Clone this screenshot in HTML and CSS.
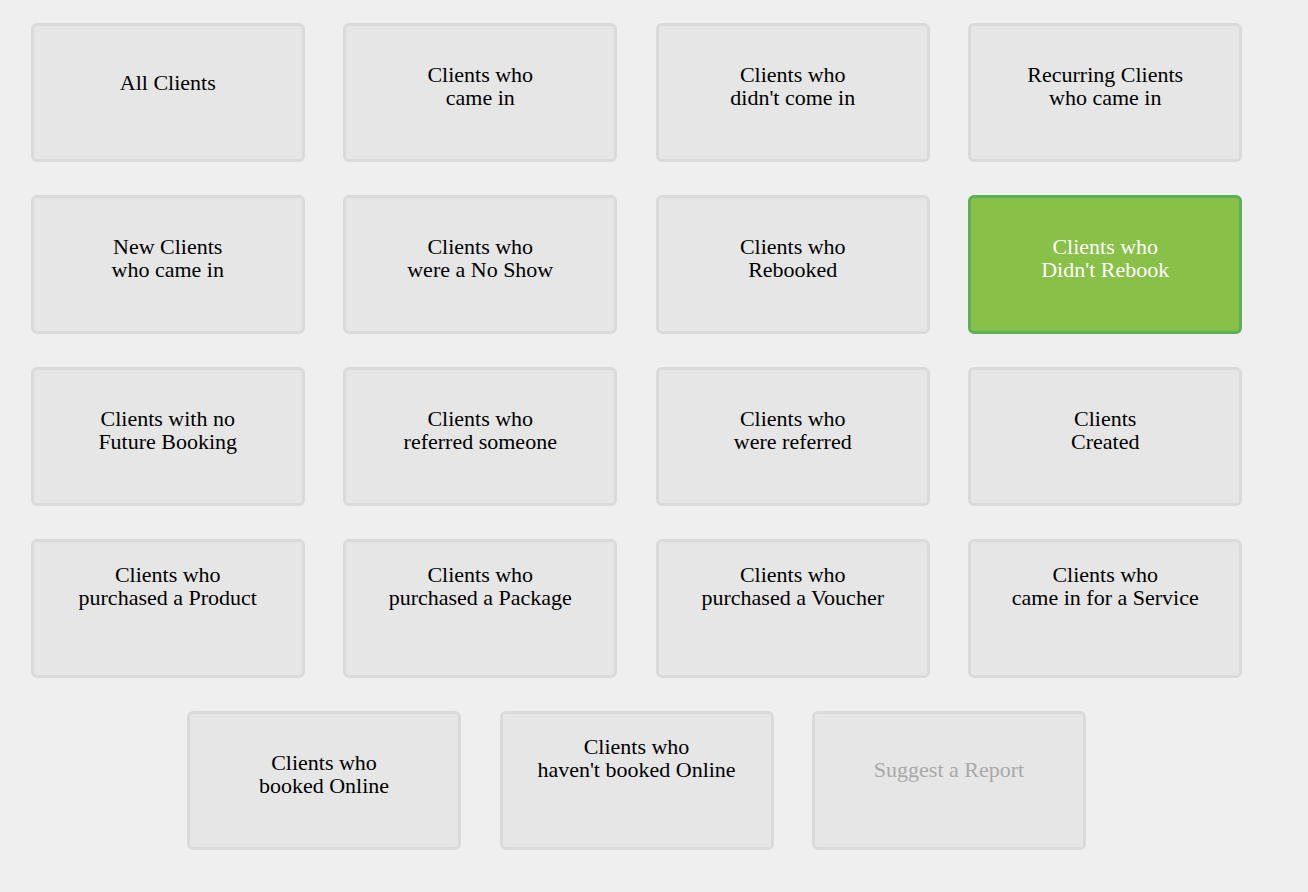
FILE: index.html
```html
<!DOCTYPE html>
<html>
<head>
<meta charset="utf-8">
<link rel="stylesheet" href="styles.css">
</head>
<body>
<div class="grid">
  <div class="card one">All Clients</div>
  <div class="card two">Clients who<br>came in</div>
  <div class="card two">Clients who<br>didn't come in</div>
  <div class="card two">Recurring Clients<br>who came in</div>

  <div class="card two">New Clients<br>who came in</div>
  <div class="card two">Clients who<br>were a No Show</div>
  <div class="card two">Clients who<br>Rebooked</div>
  <div class="card two active">Clients who<br>Didn't Rebook</div>

  <div class="card two">Clients with no<br>Future Booking</div>
  <div class="card two">Clients who<br>referred someone</div>
  <div class="card two">Clients who<br>were referred</div>
  <div class="card two">Clients<br>Created</div>

  <div class="card high">Clients who<br>purchased a Product</div>
  <div class="card high">Clients who<br>purchased a Package</div>
  <div class="card high">Clients who<br>purchased a Voucher</div>
  <div class="card high">Clients who<br>came in for a Service</div>

  <div class="card two">Clients who<br>booked Online</div>
  <div class="card high">Clients who<br>haven't booked Online</div>
  <div class="card one suggest">Suggest a Report</div>
</div>
</body>
</html>
```
FILE: styles.css
```css
html, body {
  margin: 0;
  padding: 0;
  background: #efefef;
}

body {
  font-family: "Liberation Serif", "Times New Roman", serif;
  font-size: 22px;
  color: #000;
}

.grid {
  display: flex;
  flex-wrap: wrap;
  justify-content: center;
  width: 1250px;
  margin-left: 11.5px;
  padding-top: 23px;
  row-gap: 33px;
}

.card {
  box-sizing: border-box;
  width: 274px;
  height: 139px;
  margin: 0 19.25px;
  background: #e6e6e6;
  border: 3px solid #dadada;
  border-radius: 6px;
  text-align: center;
  line-height: 22.5px;
}

.card.one {
  padding-top: 46px;
}

.card.two {
  padding-top: 38px;
}

.card.high {
  padding-top: 22px;
}

.card.suggest {
  padding-top: 45px;
  color: #a9a9a9;
}

.card.active {
  background: #88c048;
  border-color: #5aaf58;
  color: #fff;
}
```
